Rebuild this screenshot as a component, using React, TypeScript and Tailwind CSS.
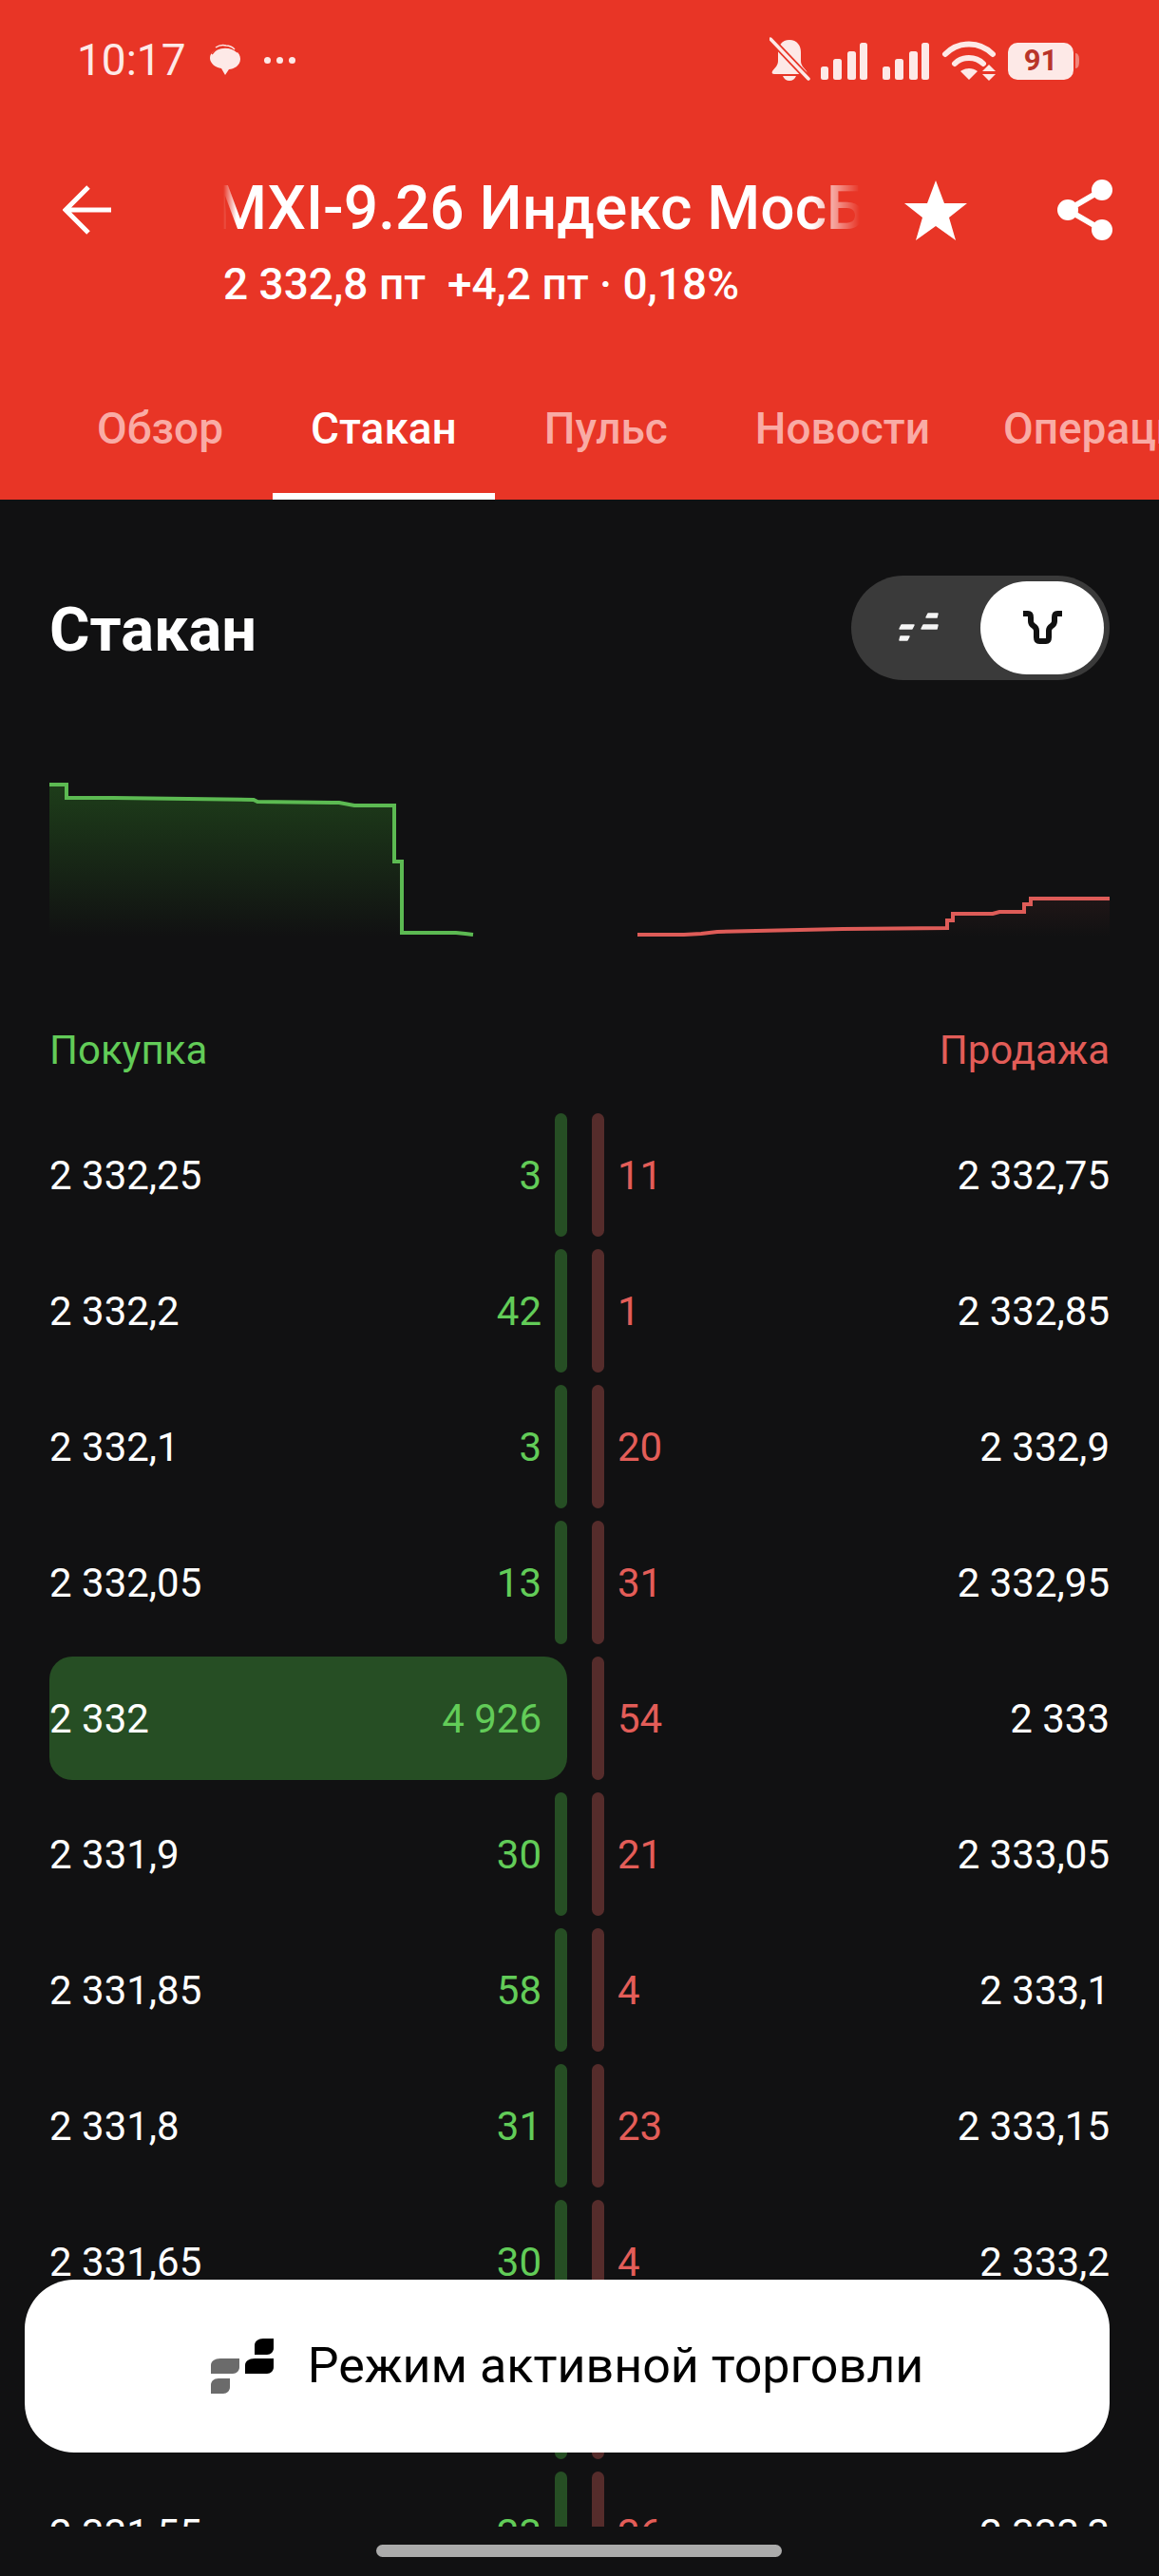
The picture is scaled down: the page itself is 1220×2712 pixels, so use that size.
const rows = [
  { bid: "2 332,25", bidQty: "3", askQty: "11", ask: "2 332,75" },
  { bid: "2 332,2", bidQty: "42", askQty: "1", ask: "2 332,85" },
  { bid: "2 332,1", bidQty: "3", askQty: "20", ask: "2 332,9" },
  { bid: "2 332,05", bidQty: "13", askQty: "31", ask: "2 332,95" },
  { bid: "2 332", bidQty: "4 926", askQty: "54", ask: "2 333", active: true },
  { bid: "2 331,9", bidQty: "30", askQty: "21", ask: "2 333,05" },
  { bid: "2 331,85", bidQty: "58", askQty: "4", ask: "2 333,1" },
  { bid: "2 331,8", bidQty: "31", askQty: "23", ask: "2 333,15" },
  { bid: "2 331,65", bidQty: "30", askQty: "4", ask: "2 333,2" },
  { bid: "2 331,6", bidQty: "12", askQty: "8", ask: "2 333,25" },
  { bid: "2 331,55", bidQty: "23", askQty: "26", ask: "2 333,3" },
];

const tabs = ["Обзор", "Стакан", "Пульс", "Новости", "Операции"];

function StatusIcons() {
  return (
    <svg width="328" height="50" viewBox="810 36 328 50" className="text-[#fde9e7]" fill="currentColor">
      <path d="M831 40c-8 0-12 6-12 13v9c0 5-3 7-6 11-1 2 0 3 2 3h32c2 0 3-1 2-3-3-4-6-6-6-11v-9c0-7-4-13-12-13z" />
      <path d="M824 78h14c-1 3-4 5-7 5s-6-2-7-5z" />
      <path d="M811 39l40 42" stroke="#e83526" strokeWidth="7" />
      <path d="M811 39l40 42" stroke="currentColor" strokeWidth="3.5" strokeLinecap="round" />
      <rect x="864" y="68" width="8" height="14" rx="2.5" />
      <rect x="877" y="60" width="9" height="22" rx="2.5" />
      <rect x="892" y="52" width="9" height="30" rx="2.5" />
      <rect x="905" y="43" width="8" height="39" rx="2.5" />
      <rect x="929" y="68" width="8" height="14" rx="2.5" />
      <rect x="942" y="60" width="9" height="22" rx="2.5" />
      <rect x="957" y="52" width="9" height="30" rx="2.5" />
      <rect x="970" y="43" width="8" height="39" rx="2.5" />
      <path d="M995 55c14-14 36-14 50 0" fill="none" stroke="currentColor" strokeWidth="6" strokeLinecap="round" />
      <path d="M1005 65c8-8 22-8 30 0" fill="none" stroke="currentColor" strokeWidth="6" strokeLinecap="round" />
      <path d="M1011 73c5-4 13-4 18 0l-9 9z" />
      <path d="M1041 66l-7 7h14z" />
      <path d="M1041 83l-7-7h14z" />
      <rect x="1061" y="43" width="69" height="39" rx="10" />
      <path d="M1132 54c3 0 4 3 4 8s-1 8-4 8z" opacity="0.45" />
    </svg>
  );
}

function ModeIcon() {
  return (
    <svg width="66" height="58" viewBox="225 2462 66 58">
      <path d="M280 2462h11v10c0 4-3 7-7 7h-13v-10c0-4 4-7 9-7z" fill="#000" />
      <path d="M271 2483h20v9c0 4-3 7-7 7h-23v-9c0-4 4-7 10-7z" fill="#000" />
      <path d="M235 2483h20v9c0 4-3 7-7 7h-23v-9c0-4 4-7 10-7z" fill="#6b6b6b" />
      <path d="M233 2504h12v9c0 4-3 7-7 7h-13v-9c0-4 3-7 8-7z" fill="#6b6b6b" />
    </svg>
  );
}

function Depth() {
  const buy =
    "M52 826H70V840H120L267 842L271 844L350 845H357L373 848H415V907H423V982H480L490 983L498 984";
  const sell =
    "M671 984H720L738 983L755 981L887 978L997 977V969H1003V962H1045L1052 960H1078V952H1085V946H1168";
  return (
    <svg width="1116" height="180" viewBox="52 815 1116 180" className="block" fill="none">
      <defs>
        <linearGradient id="buyFill" x1="0" y1="0" x2="0" y2="1">
          <stop offset="0" stopColor="#2f7a25" stopOpacity="0.42" />
          <stop offset="1" stopColor="#2f7a25" stopOpacity="0" />
        </linearGradient>
        <linearGradient id="sellFill" x1="0" y1="0" x2="0" y2="1">
          <stop offset="0" stopColor="#e35a55" stopOpacity="0.07" />
          <stop offset="1" stopColor="#e35a55" stopOpacity="0" />
        </linearGradient>
      </defs>
      <path d={buy + "V986H52Z"} fill="url(#buyFill)" />
      <path d={sell + "V986H671Z"} fill="url(#sellFill)" />
      <path d={buy} stroke="#5cba52" strokeWidth="4" />
      <path d={sell} stroke="#de5c58" strokeWidth="4" />
    </svg>
  );
}

export default function App() {
  return (
    <div className="relative w-[1220px] h-[2712px] overflow-hidden bg-[#111112] text-white font-['Roboto',sans-serif]">
      <header className="h-[526px] bg-[#e83526] flex flex-col">
        <div className="h-[126px] flex items-center pl-[81px] pr-[82px] text-[#fde9e7]">
          <span className="text-[46px] leading-none">10:17</span>
          <svg width="36" height="34" viewBox="0 0 36 34" className="ml-[23px]" fill="currentColor">
            <path d="M18 4c9 0 16 5 16 12s-7 11-12 11l-4 6-4-7C8 25 2 21 2 15S9 4 18 4z" />
            <path d="M4 11c3-5 8-7 14-7s10 2 13 5" fill="none" stroke="#e83526" strokeWidth="1.5" />
            <path d="M8 4c3-2 7-3 11-2 4 0 7 2 9 4" fill="none" stroke="currentColor" strokeWidth="1.5" />
          </svg>
          <span className="ml-[23px] flex gap-[6px]">
            <i className="w-[7px] h-[7px] rounded-full bg-[#fde9e7]" />
            <i className="w-[7px] h-[7px] rounded-full bg-[#fde9e7]" />
            <i className="w-[7px] h-[7px] rounded-full bg-[#fde9e7]" />
          </span>
          <div className="relative ml-auto">
            <StatusIcons />
            <span className="absolute left-[251px] top-[6px] w-[69px] h-[39px] flex items-center justify-center text-[31px] font-bold leading-none text-[#b9352a]">
              91
            </span>
          </div>
        </div>
        <div className="flex items-start h-[240px]">
          <div className="w-[235px] pl-[66px] pt-[69px]">
            <svg width="52" height="52" viewBox="66 195 52 52" fill="none" stroke="#fff" strokeWidth="5">
              <path d="M117 221H70M93 197L69 221L93 245" />
            </svg>
          </div>
          <div className="w-[670px] pt-[60px]">
            <div className="h-[68px] overflow-hidden whitespace-nowrap [mask-image:linear-gradient(90deg,transparent,#000_14px,#000_calc(100%-50px),transparent)]">
              <div className="-ml-[10px] text-[64px] font-medium leading-[68px]">MXI-9.26 Индекс МосБиржи</div>
            </div>
            <div className="mt-[20px] text-[46px] font-medium leading-[50px] whitespace-pre">2 332,8 пт  +4,2 пт · 0,18%</div>
          </div>
          <div className="ml-[45px] pt-[62px]">
            <svg width="70" height="68" viewBox="950 188 70 68" fill="#fff">
              <path d="M985 190L994 214H1018L999 229L1006 253L985 238L964 253L971 229L952 214H976Z" />
            </svg>
          </div>
          <div className="ml-[90px] pt-[62px]">
            <svg width="64" height="68" viewBox="1110 188 64 68" fill="#fff" stroke="#fff">
              <path d="M1160 200L1124 221L1160 242" fill="none" strokeWidth="6" />
              <circle cx="1160" cy="200" r="11" strokeWidth="0" />
              <circle cx="1124" cy="221" r="11" strokeWidth="0" />
              <circle cx="1160" cy="242" r="11" strokeWidth="0" />
            </svg>
          </div>
        </div>
        <nav className="flex-1 flex pl-[62px] gap-[12px] overflow-hidden whitespace-nowrap">
          {tabs.map((tab, i) => (
            <div
              key={tab}
              className={`px-[40px] pt-[60px] text-[46px] font-medium leading-[50px] border-b-[7px] ${
                i === 1 ? "text-white border-white" : "text-[#f9aba5] border-transparent"
              } ${i === 4 ? "-ml-[15px]" : ""}`}
            >
              {tab}
            </div>
          ))}
        </nav>
      </header>

      <main className="px-[52px]">
        <div className="mt-[80px] flex items-center justify-between h-[110px]">
          <h1 className="text-[65px] font-bold leading-none pt-[4px]">Стакан</h1>
          <div className="w-[272px] h-[110px] rounded-full bg-[#3a3a3a] flex items-center justify-end pr-[6px]">
            <svg width="44" height="32" viewBox="0 0 44 32" className="mr-[43px]" fill="#f5f5f5" stroke="#f5f5f5" strokeWidth="1.5" strokeLinejoin="round">
              <path d="M4 13h13l-2 4H2z" />
              <path d="M27 13h15l-1 4H25z" />
              <path d="M32 1h10l-1 4H30z" />
              <path d="M3 25h9l-2 4H2z" />
            </svg>
            <div className="w-[130px] h-[98px] rounded-full bg-white flex items-center justify-center">
              <svg width="41" height="36" viewBox="0 0 41 36" fill="none" stroke="#111" strokeWidth="6">
                <path d="M0 3H5Q8 3 8 7V11Q8 14 11 16Q14 18 14 21V28Q14 32 17 32H24Q27 32 27 28V21Q27 18 30 16Q33 14 33 11V7Q33 3 36 3H41" />
              </svg>
            </div>
          </div>
        </div>

        <div className="mt-[99px]">
          <Depth />
        </div>

        <div className="mt-[86px] h-[50px] flex items-center justify-between text-[42px] leading-none">
          <span className="text-[#62cc58]">Покупка</span>
          <span className="text-[#e35d58]">Продажа</span>
        </div>

        <div className="mt-[41px] h-[1488px] overflow-hidden flex flex-col gap-[13px] text-[42px] leading-none">
          {rows.map((row) => (
            <div key={row.bid} className="h-[130px] shrink-0 flex items-stretch">
              <div
                className={`w-[545px] flex items-center rounded-[24px] ${row.active ? "bg-[#264e24]" : ""}`}
              >
                <span className="flex-1 pt-[2px]">{row.bid}</span>
                <span className="text-[#62cc58] pt-[2px]">{row.bidQty}</span>
                <i className={`ml-[14px] w-[13px] h-full rounded-full ${row.active ? "" : "bg-[#264e24]"}`} />
              </div>
              <div className="ml-[26px] flex-1 flex items-center">
                <i className="mr-[14px] w-[13px] h-full rounded-full bg-[#552c2b]" />
                <span className="text-[#e35d58] pt-[2px]">{row.askQty}</span>
                <span className="flex-1 text-right pt-[2px]">{row.ask}</span>
              </div>
            </div>
          ))}
        </div>
      </main>

      <button className="absolute left-[26px] top-[2400px] w-[1142px] h-[182px] rounded-[52px] bg-white flex items-center justify-center gap-[36px] text-black text-[52px] leading-none">
        <ModeIcon />
        <span>Режим активной торговли</span>
      </button>

      <div className="absolute left-[396px] top-[2679px] w-[427px] h-[13px] rounded-full bg-[#ababab]" />
    </div>
  );
}
